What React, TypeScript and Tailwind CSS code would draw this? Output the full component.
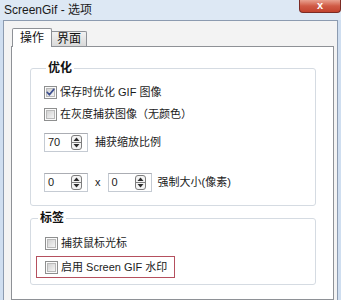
import React from "react";

const FONT = { fontFamily: '"Liberation Sans", "Noto Sans CJK SC", sans-serif' };

function Checkbox({ checked = false }: { checked?: boolean }) {
  return (
    <svg width="13" height="13" viewBox="0 0 13 13" className="shrink-0">
      <defs>
        <linearGradient id="cbg" x1="0" y1="0" x2="1" y2="1">
          <stop offset="0" stopColor="#cfcfcf" />
          <stop offset="1" stopColor="#f7f7f7" />
        </linearGradient>
      </defs>
      <rect x="0.5" y="0.5" width="12" height="12" fill="#fbfbfb" stroke="#8e8f8f" />
      <rect x="2.5" y="2.5" width="8" height="8" fill="url(#cbg)" stroke="#b9b9b9" />
      {checked && (
        <path d="M3.2 6.3 L5.4 8.8 L9.8 3.4" fill="none" stroke="#3d4f8f" strokeWidth="1.7" strokeLinecap="round" strokeLinejoin="round" />
      )}
    </svg>
  );
}

function SpinIcon() {
  return (
    <svg width="11" height="15" viewBox="0 0 11 15" className="shrink-0">
      <rect x="0.5" y="0.5" width="10" height="14" rx="2.5" fill="#f4f4f4" stroke="#7d7d7d" />
      <line x1="1" y1="7.5" x2="10" y2="7.5" stroke="#7d7d7d" />
      <path d="M2.5 6 L8.5 6 L5.5 2.5 Z" fill="#2b2b2b" />
      <path d="M2.5 9 L8.5 9 L5.5 12.5 Z" fill="#2b2b2b" />
    </svg>
  );
}

function Spinner({ value }: { value: string }) {
  return (
    <div className="w-[44px] h-[19px] flex items-center justify-between border border-[#c5cbd3] border-t-[#abadb3] bg-white pl-[3px] pr-[5px]">
      <span className="text-[11px] leading-[13px] text-[#1b1b1b]">{value}</span>
      <SpinIcon />
    </div>
  );
}

function CheckRow({ checked = false, label }: { checked?: boolean; label: string }) {
  return (
    <div className="flex items-center h-[13px] gap-[3px]">
      <Checkbox checked={checked} />
      <span className="text-[11px] leading-[13px] text-[#1b1b1b] whitespace-nowrap">{label}</span>
    </div>
  );
}

export default function App() {
  return (
    <div className="w-[341px] h-[300px] overflow-hidden bg-[#cfdef0] flex flex-col" style={FONT}>
      {/* title bar */}
      <div className="h-[20px] flex items-start justify-between bg-[#dde8f4]">
        <span className="pl-[4px] pt-[3px] text-[12px] leading-[14px] text-[#1a1a1a]">ScreenGif - 选项</span>
        <div className="w-[42px] h-[13px] rounded-b-[4px] border border-t-0 border-[#7b2b24] bg-gradient-to-b from-[#e8a08f] via-[#d05a45] to-[#c2432f] flex items-center justify-center">
          <span className="text-white text-[11px] font-bold leading-[11px] -mt-[2px]">x</span>
        </div>
      </div>
      {/* window body */}
      <div className="flex-1 ml-[3px] mr-[3px] border-l border-t border-r border-[#8c9bb0] bg-[#f3f3f3] pt-[7px] pl-[7px] pr-[3px] flex flex-col">
        {/* tabs */}
        <div className="flex items-end h-[18px] pl-[1px] relative z-10">
          <div className="w-[40px] h-[19px] -mb-[1px] bg-white border border-b-0 border-[#8e9196] rounded-t-[2px] flex items-center justify-center">
            <span className="text-[12px] leading-[14px] text-[#111]">操作</span>
          </div>
          <div className="w-[35px] h-[15px] bg-gradient-to-b from-[#f2f2f2] to-[#d9d9d9] border-t border-r border-[#8e9196] rounded-tr-[2px] flex items-center justify-center">
            <span className="text-[12px] leading-[14px] text-[#111]">界面</span>
          </div>
        </div>
        {/* tab panel */}
        <div className="flex-1 border border-[#8e9196] bg-white pt-[14px] pl-[18px] pr-[17px] flex flex-col">
          <fieldset className="border border-[#d5dbe2] rounded-[3px] pl-[13px] pb-[13px]">
            <legend className="ml-[2px] px-[2px] text-[12px] leading-[14px] font-bold text-[#111]">优化</legend>
            <div className="flex flex-col mt-[11px]">
              <CheckRow checked label="保存时优化 GIF 图像" />
              <div className="mt-[9px]">
                <CheckRow label="在灰度捕获图像（无颜色）" />
              </div>
              <div className="mt-[12px] flex items-center gap-[7px]">
                <Spinner value="70" />
                <span className="text-[11px] leading-[13px] text-[#1b1b1b]">捕获缩放比例</span>
              </div>
              <div className="mt-[21px] flex items-center">
                <Spinner value="0" />
                <span className="ml-[7px] mr-[7px] text-[11px] leading-[13px] text-[#1b1b1b]">x</span>
                <Spinner value="0" />
                <span className="ml-[6px] text-[11px] leading-[13px] text-[#1b1b1b]">强制大小(像素)</span>
              </div>
            </div>
          </fieldset>
          <fieldset className="mt-[5px] border border-[#d5dbe2] rounded-[3px] pl-[5px] pb-[6px]">
            <legend className="ml-[2px] px-[2px] text-[12px] leading-[14px] font-bold text-[#111]">标签</legend>
            <div className="flex flex-col">
              <div className="mt-[12px] pl-[9px]">
                <CheckRow label="捕获鼠标光标" />
              </div>
              <div className="mt-[6px] w-[139px] h-[22px] border border-[#b5505e] pl-[8px] pt-[4px]">
                <CheckRow label="启用 Screen GIF 水印" />
              </div>
            </div>
          </fieldset>
        </div>
      </div>
    </div>
  );
}
